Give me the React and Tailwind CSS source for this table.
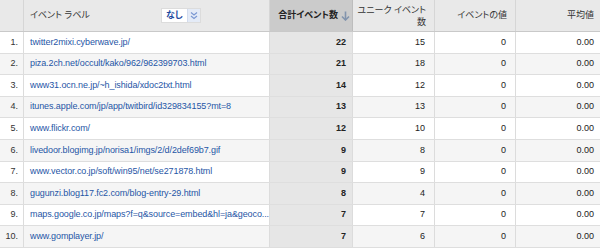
import React from "react";

const rows = [
  { label: "twitter2mixi.cyberwave.jp/", total: 22, unique: 15 },
  { label: "piza.2ch.net/occult/kako/962/962399703.html", total: 21, unique: 18 },
  { label: "www31.ocn.ne.jp/~h_ishida/xdoc2txt.html", total: 14, unique: 12 },
  { label: "itunes.apple.com/jp/app/twitbird/id329834155?mt=8", total: 13, unique: 13 },
  { label: "www.flickr.com/", total: 12, unique: 10 },
  { label: "livedoor.blogimg.jp/norisa1/imgs/2/d/2def69b7.gif", total: 9, unique: 8 },
  { label: "www.vector.co.jp/soft/win95/net/se271878.html", total: 9, unique: 9 },
  { label: "gugunzi.blog117.fc2.com/blog-entry-29.html", total: 8, unique: 4 },
  { label: "maps.google.co.jp/maps?f=q&source=embed&hl=ja&geoco...", total: 7, unique: 7 },
  { label: "www.gomplayer.jp/", total: 7, unique: 6 },
];

const font = {
  fontFamily: '"Liberation Sans", "Noto Sans CJK JP", sans-serif',
  fontFeatureSettings: '"palt"',
};

export default function App() {
  return (
    <div className="w-[600px] h-[249px] overflow-hidden bg-white text-[9px] text-[#333]" style={font}>
      {/* header */}
      <div className="flex h-[32px] border-b border-[#c9c9c9] bg-[#e9e9e9]">
        <div className="w-[24px] border-r border-[#d6d6d6]" />
        <div className="w-[246px] flex items-center pl-[6px] border-r border-[#d6d6d6]">
          <span className="w-[131px]">イベント ラベル</span>
          <div className="flex items-center h-[15px] bg-white border border-[#dcdcdc]">
            <span className="px-[4px] font-bold text-[#1d4aa0]">なし</span>
            <span className="flex items-center justify-center w-[13px] h-full bg-[#e4ebf7] border-l border-[#d3dced]">
              <svg width="8" height="9" viewBox="0 0 8 9" fill="none" stroke="#7b98d3" strokeWidth="1.2">
                <path d="M1 1.5 L4 4 L7 1.5" />
                <path d="M1 5 L4 7.5 L7 5" />
              </svg>
            </span>
          </div>
        </div>
        <div className="w-[83px] flex items-center justify-end pr-[2px] bg-[#cbcbcb] border-r border-[#bdbdbd] font-bold text-[#222]">
          <span>合計イベント数</span>
          <svg className="ml-[3px]" width="9" height="10" viewBox="0 0 9 10" fill="none" stroke="#8294ad" strokeWidth="1.6">
            <path d="M4.5 0.5 V9" />
            <path d="M1 5.5 L4.5 9 L8 5.5" />
          </svg>
        </div>
        <div className="w-[82px] flex items-center justify-end pr-[8px] border-r border-[#d6d6d6] text-right leading-[12px]">
          <span>
            ユニーク イベント
            <br />数
          </span>
        </div>
        <div className="w-[81px] flex items-center justify-end pr-[8px] border-r border-[#d6d6d6]">
          イベントの値
        </div>
        <div className="w-[84px] flex items-center justify-end pr-[6px]">平均値</div>
      </div>

      {/* body */}
      {rows.map((r, i) => (
        <div
          key={i}
          className={`flex h-[21.6px] border-b border-[#dedede] ${i % 2 ? "bg-[#f5f5f5]" : "bg-white"}`}
        >
          <div className="w-[24px] flex items-center justify-end pr-[5px] border-r border-[#dcdcdc]">
            {i + 1}.
          </div>
          <div className="w-[246px] flex items-center pl-[6px] pr-[2px] border-r border-[#dcdcdc] whitespace-nowrap tracking-[-0.1px] text-[#1f56a6]">
            {r.label}
          </div>
          <div className="w-[83px] flex items-center justify-end pr-[6px] bg-[#e6e6e6] border-r border-[#dcdcdc] font-bold text-[#222]">
            {r.total}
          </div>
          <div className="w-[82px] flex items-center justify-end pr-[9px] border-r border-[#dcdcdc] text-[#222]">
            {r.unique}
          </div>
          <div className="w-[81px] flex items-center justify-end pr-[9px] border-r border-[#dcdcdc] text-[#222]">
            0
          </div>
          <div className="w-[84px] flex items-center justify-end pr-[6px] text-[#222]">0.00</div>
        </div>
      ))}
    </div>
  );
}
